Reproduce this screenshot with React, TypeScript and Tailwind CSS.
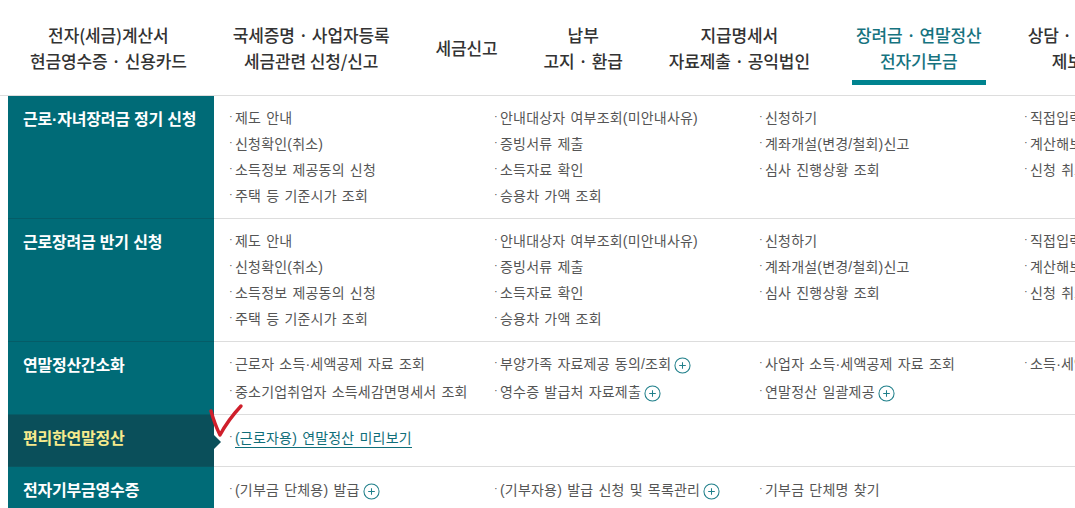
const navItems = [
  { lines: ["전자(세금)계산서", "현금영수증 · 신용카드"] },
  { lines: ["국세증명 · 사업자등록", "세금관련 신청/신고"] },
  { lines: ["세금신고"] },
  { lines: ["납부", "고지 · 환급"] },
  { lines: ["지급명세서", "자료제출 · 공익법인"] },
  { lines: ["장려금 · 연말정산", "전자기부금"], active: true },
  { lines: ["상담 · 불복 · 고충", "제보 · 기타"] },
]

type Link = { label: string; plus?: boolean; underline?: boolean }

const apply: Link[][] = [
  [{ label: "제도 안내" }, { label: "신청확인(취소)" }, { label: "소득정보 제공동의 신청" }, { label: "주택 등 기준시가 조회" }],
  [{ label: "안내대상자 여부조회(미안내사유)" }, { label: "증빙서류 제출" }, { label: "소득자료 확인" }, { label: "승용차 가액 조회" }],
  [{ label: "신청하기" }, { label: "계좌개설(변경/철회)신고" }, { label: "심사 진행상황 조회" }],
  [{ label: "직접입력" }, { label: "계산해보기" }, { label: "신청 취소" }],
]

const sections = [
  { title: "근로·자녀장려금 정기 신청", columns: apply, height: "h-[123px]", top: "pt-[9px]", line: "h-[26px]" },
  { title: "근로장려금 반기 신청", columns: apply, height: "h-[123px]", top: "pt-[9px]", line: "h-[26px]" },
  {
    title: "연말정산간소화",
    columns: [
      [{ label: "근로자 소득·세액공제 자료 조회" }, { label: "중소기업취업자 소득세감면명세서 조회" }],
      [{ label: "부양가족 자료제공 동의/조회", plus: true }, { label: "영수증 발급처 자료제출", plus: true }],
      [{ label: "사업자 소득·세액공제 자료 조회" }, { label: "연말정산 일괄제공", plus: true }],
      [{ label: "소득·세액공제 자료 조회" }],
    ],
    height: "h-[73px]",
    top: "pt-[9px]",
    line: "h-[28px]",
  },
  {
    title: "편리한연말정산",
    columns: [[{ label: "(근로자용) 연말정산 미리보기", underline: true }]],
    height: "h-[52px]",
    top: "pt-[10px]",
    line: "h-[26px]",
    selected: true,
  },
  {
    title: "전자기부금영수증",
    columns: [
      [{ label: "(기부금 단체용) 발급", plus: true }],
      [{ label: "(기부자용) 발급 신청 및 목록관리", plus: true }],
      [{ label: "기부금 단체명 찾기" }],
    ],
    height: "h-[60px]",
    top: "pt-[10px]",
    line: "h-[28px]",
  },
]

const PlusIcon = () => (
  <svg viewBox="0 0 18 18" className="ml-[3px] mt-[6px] h-[17px] w-[17px] shrink-0">
    <circle cx="9" cy="9" r="8" fill="none" stroke="#1f7f8a" strokeWidth="1.1" />
    <path d="M5.5 9h7M9 5.5v7" fill="none" stroke="#1f7f8a" strokeWidth="1.1" />
  </svg>
)

const App = () => {
  return (
    <div
      className="relative h-[508px] w-[1075px] overflow-hidden bg-white text-[#444]"
      style={{ fontFamily: '"Liberation Sans", "Noto Sans CJK KR", sans-serif' }}
    >
      <nav className="flex h-[96px] gap-[38px] border-b border-[#ddd] pl-[26px] font-['Noto_Sans_CJK_KR']">
        {navItems.map((item) => (
          <div
            key={item.lines[0]}
            className={`flex h-[85px] shrink-0 flex-col justify-center whitespace-nowrap border-b-[5px] px-[4px] pt-[15px] text-center text-[17px] font-medium leading-[26px] tracking-[-0.12px] ${
              item.active ? "border-[#00838f] text-[#16737f]" : "border-transparent text-[#333]"
            }`}
          >
            {item.lines.map((line) => (
              <span key={line}>{line}</span>
            ))}
          </div>
        ))}
      </nav>

      <div className="ml-[8px]">
        {sections.map((section) => (
          <section key={section.title} className={`flex ${section.height}`}>
            <h3
              className={`relative w-[206px] shrink-0 whitespace-nowrap border-b px-[15px] pt-[11px] text-[16px] font-bold leading-[26px] tracking-[-0.2px] ${
                section.selected
                  ? "border-[#0a5560] bg-[#0a4f5a] text-[#f6ea8c]"
                  : "border-[#055c67] bg-[#006b77] text-white"
              }`}
            >
              {section.title}
              {section.selected && (
                <span className="absolute left-full top-[20px] h-0 w-0 border-y-[7px] border-l-[7px] border-y-transparent border-l-[#0a4f5a]" />
              )}
            </h3>
            <div className={`flex flex-1 border-b border-[#ddd] pl-[15px] ${section.top}`}>
              {section.columns.map((column, i) => (
                <ul key={i} className="w-[265px] shrink-0">
                  {column.map((link) => (
                    <li
                      key={link.label}
                      className={`flex whitespace-nowrap text-[14px] leading-[26px] tracking-[0.2px] text-[#555] [word-spacing:1px] ${section.line}`}
                    >
                      <span className="w-[6px] shrink-0 text-[11px] leading-[22px]">·</span>
                      <span className={link.underline ? "h-[23px] border-b border-[#0f6e79] text-[#0f6e79]" : ""}>
                        {link.label}
                      </span>
                      {link.plus && <PlusIcon />}
                    </li>
                  ))}
                </ul>
              ))}
            </div>
          </section>
        ))}
      </div>

      <svg viewBox="0 0 40 40" className="absolute left-[208px] top-[403px] h-[40px] w-[40px]">
        <path d="M3 8 Q7 22 12 32 Q20 17 33 3" fill="none" stroke="#cf1f2b" strokeWidth="3.4" strokeLinecap="round" strokeLinejoin="round" />
      </svg>
    </div>
  )
}

export default App
